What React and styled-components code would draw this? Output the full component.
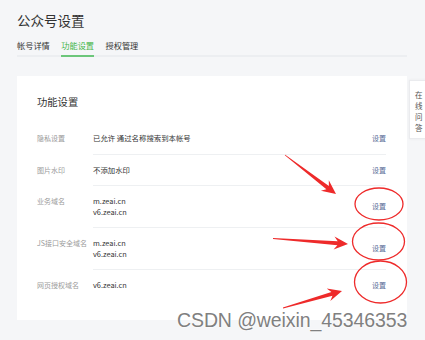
import React from "react";
import styled, { createGlobalStyle } from "styled-components";

const GlobalStyle = createGlobalStyle`
  html, body {
    margin: 0;
    padding: 0;
    background: #f5f6f8;
    font-family: "Noto Sans CJK SC", "Noto Sans", sans-serif;
    overflow: hidden;
  }
`;

const Page = styled.div`
  position: relative;
  width: 425px;
  height: 340px;
  padding: 11px 0 0 17px;
  box-sizing: border-box;
`;

const Title = styled.h1`
  margin: 0;
  font-size: 13.5px;
  line-height: 18px;
  font-weight: 400;
  color: #333;
`;

const TabBar = styled.div`
  display: flex;
  gap: 11.5px;
  width: 390px;
  margin-top: 10.5px;
  border-bottom: 2px solid #eceef1;
`;

const Tab = styled.div`
  font-size: 8.2px;
  line-height: 11px;
  padding-bottom: 4.5px;
  color: ${(p) => (p.$active ? "#44b549" : "#333")};
  border-bottom: 2px solid ${(p) => (p.$active ? "#6cc67a" : "transparent")};
  margin-bottom: -2px;
`;

const Card = styled.div`
  width: 390px;
  margin-top: 19px;
  background: #fff;
  padding: 20px 21px 19.5px 20px;
  box-sizing: border-box;
`;

const CardTitle = styled.h2`
  margin: 0 0 15px;
  font-size: 10.3px;
  line-height: 12px;
  font-weight: 400;
  color: #333;
`;

const Row = styled.div`
  display: flex;
`;

const Label = styled.div`
  width: 56px;
  flex: none;
  padding: 10px 0;
  font-size: 7px;
  line-height: 10.5px;
  color: #9a9a9a;
  white-space: nowrap;
`;

const Body = styled.div`
  flex: 1;
  display: flex;
  align-items: center;
  justify-content: space-between;
  padding: 10px 0;
  border-bottom: ${(p) => (p.$last ? "none" : "1px solid #eef0f2")};
`;

const Values = styled.div`
  font-size: 7.4px;
  line-height: 10.5px;
  color: #353535;
`;

const Action = styled.a`
  font-size: 7px;
  line-height: 10.5px;
  color: #576b95;
  text-decoration: none;
`;

const SideTab = styled.div`
  position: absolute;
  left: 409px;
  top: 80px;
  width: 22px;
  height: 59px;
  padding: 7.5px 0 0 5px;
  box-sizing: border-box;
  background: #fff;
  border: 1px solid #eaebee;
  box-shadow: 0 0 3px rgba(0, 0, 0, 0.05);
  font-size: 7.5px;
  line-height: 11px;
  color: #555;
`;

const Overlay = styled.svg`
  position: absolute;
  left: 0;
  top: 0;
  pointer-events: none;
`;

const Watermark = styled.div`
  position: absolute;
  left: 177px;
  top: 308px;
  font-family: "Liberation Sans", Arial, sans-serif;
  font-size: 19.5px;
  line-height: 24px;
  color: #808080;
  letter-spacing: -0.1px;
  text-shadow: 0 0 2px #fff, 0 0 2px #fff;
  white-space: nowrap;
`;

const rows = [
  { label: "隐私设置", values: ["已允许 通过名称搜索到本帐号"] },
  { label: "图片水印", values: ["不添加水印"] },
  { label: "业务域名", values: ["m.zeai.cn", "v6.zeai.cn"] },
  { label: "JS接口安全域名", values: ["m.zeai.cn", "v6.zeai.cn"] },
  { label: "网页授权域名", values: ["v6.zeai.cn"] },
];

function arrow(x1, y1, x2, y2, headLen, headW, shaftW) {
  const dx = x2 - x1;
  const dy = y2 - y1;
  const len = Math.hypot(dx, dy);
  const ux = dx / len;
  const uy = dy / len;
  const nx = -uy;
  const ny = ux;
  const bx = x2 - ux * headLen;
  const by = y2 - uy * headLen;
  const nx2 = x2 - ux * headLen * 0.75;
  const ny2 = y2 - uy * headLen * 0.75;
  const pts = [
    [x1 + nx * 0.4, y1 + ny * 0.4],
    [nx2 + nx * shaftW, ny2 + ny * shaftW],
    [bx + nx * headW, by + ny * headW],
    [x2, y2],
    [bx - nx * headW, by - ny * headW],
    [nx2 - nx * shaftW, ny2 - ny * shaftW],
    [x1 - nx * 0.4, y1 - ny * 0.4],
  ];
  return pts.map((p) => p.map((v) => v.toFixed(1)).join(",")).join(" ");
}

function Annotations() {
  const red = "#ee2a2a";
  return (
    <Overlay width="425" height="340" viewBox="0 0 425 340">
      <ellipse cx="379" cy="204" rx="24" ry="16" fill="none" stroke={red} strokeWidth="1.3" />
      <ellipse cx="378.5" cy="241.5" rx="26" ry="18.5" fill="none" stroke={red} strokeWidth="1.3" />
      <ellipse cx="380.5" cy="282" rx="26" ry="21" fill="none" stroke={red} strokeWidth="1.3" />
      <polygon points={arrow(285, 155, 336, 194, 14, 6.5, 2)} fill={red} />
      <polygon points={arrow(273, 238.5, 348, 244, 14, 6.5, 2)} fill={red} />
      <polygon points={arrow(283, 308, 342, 291, 14, 6.5, 2)} fill={red} />
    </Overlay>
  );
}

export default function App() {
  return (
    <Page>
      <GlobalStyle />
      <Title>公众号设置</Title>
      <TabBar>
        <Tab>帐号详情</Tab>
        <Tab $active>功能设置</Tab>
        <Tab>授权管理</Tab>
      </TabBar>
      <Card>
        <CardTitle>功能设置</CardTitle>
        {rows.map((row, i) => (
          <Row key={row.label}>
            <Label>{row.label}</Label>
            <Body $last={i === rows.length - 1}>
              <Values>
                {row.values.map((v) => (
                  <div key={v}>{v}</div>
                ))}
              </Values>
              <Action href="#">设置</Action>
            </Body>
          </Row>
        ))}
      </Card>
      <SideTab>
        在<br />线<br />问<br />答
      </SideTab>
      <Annotations />
      <Watermark>CSDN @weixin_45346353</Watermark>
    </Page>
  );
}
